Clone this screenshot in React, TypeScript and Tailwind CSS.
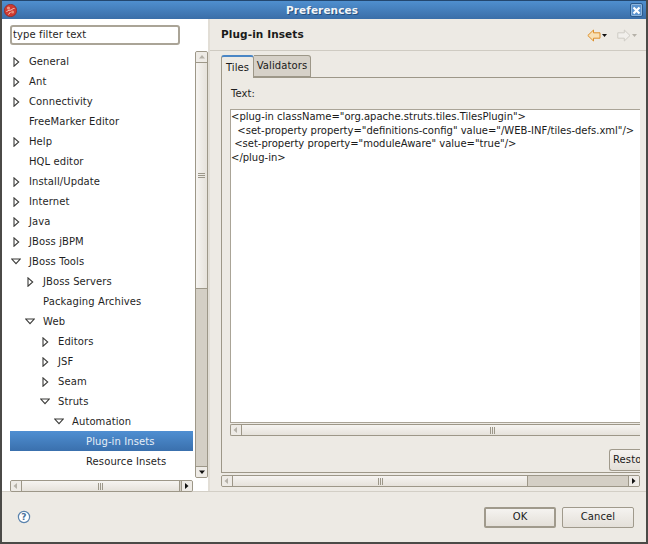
const tree: [string, number, "r" | "d" | ""][] = [
  ["General", 0, "r"], ["Ant", 0, "r"], ["Connectivity", 0, "r"], ["FreeMarker Editor", 0, ""],
  ["Help", 0, "r"], ["HQL editor", 0, ""], ["Install/Update", 0, "r"], ["Internet", 0, "r"],
  ["Java", 0, "r"], ["JBoss jBPM", 0, "r"], ["JBoss Tools", 0, "d"], ["JBoss Servers", 1, "r"],
  ["Packaging Archives", 1, ""], ["Web", 1, "d"], ["Editors", 2, "r"], ["JSF", 2, "r"],
  ["Seam", 2, "r"], ["Struts", 2, "d"], ["Automation", 3, "d"], ["Plug-in Insets", 4, ""], ["Resource Insets", 4, ""],
];
const indent = ["pl-[19px]", "pl-[33px]", "pl-[48px]", "pl-[62px]", "pl-[76px]"];

function Twist({ k }: { k: "r" | "d" }) {
  return k === "r" ? (
    <svg width="7" height="10" viewBox="0 0 7 10" className="absolute left-[-16px] top-[2px]"><path d="M1 .8 L5.7 5 L1 9.2 Z" fill="#fff" stroke="#3a3a38" strokeWidth="1.1" /></svg>
  ) : (
    <svg width="10" height="7" viewBox="0 0 10 7" className="absolute left-[-18px] top-[3px]"><path d="M.8 1 L9.2 1 L5 5.7 Z" fill="#fff" stroke="#3a3a38" strokeWidth="1.1" /></svg>
  );
}

function Tri({ dir, dim }: { dir: "l" | "r" | "u" | "d"; dim?: boolean }) {
  const d = { l: "M5 1 L1.5 4 L5 7 Z", r: "M2 1 L5.5 4 L2 7 Z", u: "M1 5.5 L4 2 L7 5.5 Z", d: "M1 2.5 L4 6 L7 2.5 Z" }[dir];
  return <svg width="8" height="8" viewBox="0 0 8 8"><path d={d} fill={dim ? "#b5b1a8" : "#111"} /></svg>;
}

function Grip() {
  return <div className="flex gap-[1px]"><i className="w-[1px] h-[7px] bg-[#9c9789]" /><i className="w-[1px] h-[7px] bg-[#9c9789]" /><i className="w-[1px] h-[7px] bg-[#9c9789]" /></div>;
}

function HScroll({ right, thumbEnd, className }: { right: boolean; thumbEnd?: number; className: string }) {
  return (
    <div className={`flex shrink-0 h-[12px] border border-[#9d9788] rounded-[2px] bg-[#d4cfc5] overflow-hidden ${className}`}>
      <div className="w-[11px] shrink-0 flex items-center justify-center bg-[#eeebe6] border-r border-[#9d9788]"><Tri dir="l" dim /></div>
      <div className="flex shrink-0 items-center justify-center bg-gradient-to-b from-[#f6f4f1] to-[#e6e2db] border-r border-[#9d9788]" style={{ width: thumbEnd }}>
        <Grip />
      </div>
      <div className="flex-1" />
      {right && <div className="w-[11px] shrink-0 flex items-center justify-center bg-[#eeebe6] border-l border-[#9d9788]"><Tri dir="r" /></div>}
    </div>
  );
}

function Btn({ label, def }: { label: string; def?: boolean }) {
  return (
    <div className={`w-[72px] h-[21px] flex items-center justify-center rounded-[2px] bg-gradient-to-b from-[#f5f3f0] to-[#e4e0d9] text-[#1a1a1a] ${def ? "border-2 border-[#a09a8c]" : "border border-[#a09a8c]"}`}>{label}</div>
  );
}

export default function App() {
  return (
    <div className="w-[648px] h-[544px] flex flex-col overflow-hidden bg-[#edeae4] text-[10px] tracking-[0.1px] leading-[14px] text-[#1f1f1f] font-['DejaVu_Sans',sans-serif] border-x-[2px] border-b-[2px] border-[#4b4a47]">
      <div className="h-[19px] -mx-[2px] shrink-0 relative flex items-center justify-center pr-[4px] bg-gradient-to-b from-[#4f8fcf] to-[#3a6ea8] border-t border-[#23476f]">
        <svg width="13" height="13" viewBox="0 0 13 13" className="absolute left-[4px] top-[3px]">
          <circle cx="6.5" cy="6.5" r="6.2" fill="#cf3a30" stroke="#8f2a22" strokeWidth=".7" />
          <circle cx="4.5" cy="4" r="1.6" fill="#ec9a86" />
          <circle cx="8.6" cy="8" r="1.5" fill="#e98d7a" />
          <path d="M2.5 8 C4 5.5 6 6.5 7 6 S9.5 4 10.5 4.5 M4.5 10.5 L6.5 8" stroke="#f3cfc6" strokeWidth="1" fill="none" />
        </svg>
        <span className="font-bold text-[10.5px] text-[#f2f5f8] [text-shadow:1px_1px_0_#26507e]">Preferences</span>
        <div className="absolute right-[5px] top-[2px] w-[13px] h-[14px] bg-[#5a93cf] border border-[#2b5a8d] rounded-[2px] flex items-center justify-center shadow-[inset_0_0_0_1px_#8db5dc]">
          <svg width="9" height="9" viewBox="0 0 9 9"><path d="M1.5 1.5 L7.5 7.5 M7.5 1.5 L1.5 7.5" stroke="#fff" strokeWidth="2.2" /></svg>
        </div>
      </div>

      <div className="flex h-[473px] shrink-0 border-b border-[#d3cfc6]">
        <div className="w-[206px] shrink-0 bg-white pl-[8px] pt-[6px] flex flex-col">
          <div className="w-[170px] h-[20px] border-2 border-[#aaa497] rounded-[3px] flex items-center pl-[1px] bg-white shrink-0">type filter text</div>
          <div className="flex mt-[6px] h-[427px] shrink-0">
            <div className="w-[183px] shrink-0 pt-[0px] overflow-hidden">
              {tree.map(([t, lvl, k]) => {
                const sel = t === "Plug-in Insets";
                return (
                  <div key={t} className={`h-[20px] flex items-center pt-[1px] ${indent[lvl]} ${sel ? "bg-gradient-to-b from-[#4f8fd2] to-[#3a70ad] text-[#e6eef7]" : ""}`}>
                    <span className="relative">{k && <Twist k={k} />}{t}</span>
                  </div>
                );
              })}
            </div>
            <div className="w-[13px] shrink-0 ml-[2px] flex flex-col border border-[#9d9788] rounded-[2px] bg-[#d4cfc5] overflow-hidden">
              <div className="h-[11px] shrink-0 flex items-center justify-center bg-[#eeebe6] border-b border-[#9d9788]"><Tri dir="u" dim /></div>
              <div className="h-[226px] shrink-0 flex items-center justify-center bg-gradient-to-r from-[#f6f4f1] to-[#e6e2db] border-b border-[#9d9788]">
                <div className="flex flex-col gap-[1px]"><i className="w-[7px] h-[1px] bg-[#9c9789]" /><i className="w-[7px] h-[1px] bg-[#9c9789]" /><i className="w-[7px] h-[1px] bg-[#9c9789]" /></div>
              </div>
              <div className="flex-1" />
              <div className="h-[11px] shrink-0 flex items-center justify-center bg-[#eeebe6] border-t border-[#9d9788]"><Tri dir="d" /></div>
            </div>
          </div>
          <HScroll right thumbEnd={158} className="w-[183px] mt-[2px]" />
        </div>

        <div className="w-[2px] shrink-0 bg-[#e2ded6]" />

        <div className="flex-1 min-w-0 pl-[11px] pr-[6px] flex flex-col">
          <div className="h-[32px] -ml-[11px] -mr-[6px] pl-[11px] pr-[9px] flex items-center justify-between border-b border-[#cfcbc2] shrink-0">
            <b className="text-[10.5px] text-[#1a1a1a] -mt-[1px]">Plug-in Insets</b>
            <div className="flex items-center gap-[10px] mt-[2px]">
              <svg width="20" height="13" viewBox="0 0 20 13"><path d="M.8 6.5 L6.5 1 V3.8 H13 V9.2 H6.5 V12 Z" fill="#f9e0b4" stroke="#dd8f2a" /><path d="M15 5 H20 L17.5 8 Z" fill="#111" /></svg>
              <svg width="20" height="13" viewBox="0 0 20 13"><path d="M13 6.5 L7.3 1 V3.8 H.8 V9.2 H7.3 V12 Z" fill="#f1efeb" stroke="#cfccc5" /><path d="M15 5 H20 L17.5 8 Z" fill="#b5b1a8" /></svg>
            </div>
          </div>
          <div className="flex h-[23px] mt-[4px] shrink-0 relative z-10">
            <div className="w-[33px] h-[23px] bg-[#edeae4] border border-[#9d9788] border-b-0 border-t-2 border-t-[#4a86c5] rounded-t-[3px] flex items-center justify-center text-[#1a1a1a]">Tiles</div>
            <div className="w-[57px] h-[22px] bg-[#d6d1c8] border border-[#9d9788] border-l-0 rounded-tr-[3px] flex items-center justify-center text-[#1a1a1a]">Validators</div>
          </div>
          <div className="-mt-[1px] h-[396px] shrink-0 border-l border-b border-t border-[#9d9788] overflow-hidden pl-[8px] flex flex-col">
            <div className="mt-[9px] ml-[1px] h-[14px]">Text:</div>
            <div className="mt-[8px] h-[314px] shrink-0 bg-white border border-[#aaa497] border-r-0 leading-[13.6px] tracking-normal whitespace-pre overflow-hidden text-[#1a1a1a]">
              {'<plug-in className="org.apache.struts.tiles.TilesPlugin">\n  <set-property property="definitions-config" value="/WEB-INF/tiles-defs.xml"/>\n <set-property property="moduleAware" value="true"/>\n</plug-in>'}
            </div>
            <HScroll right={false} thumbEnd={502} className="mt-[1px] border-r-0 rounded-r-none w-full" />
            <div className="flex justify-end mt-[13px] overflow-hidden">
              <div className="w-[31px] h-[22px] rounded-l-[3px] border border-r-0 border-[#a09a8c] bg-gradient-to-b from-[#f5f3f0] to-[#e4e0d9] flex items-center pl-[3px] overflow-hidden text-[#1a1a1a] whitespace-nowrap">Resto</div>
            </div>
          </div>
          <HScroll right thumbEnd={295} className="mt-[2px] w-[419px]" />
        </div>
      </div>

      <div className="flex-1 flex items-center justify-between pl-[15px] pr-[12px]">
        <svg width="14" height="14" viewBox="0 0 14 14"><circle cx="7" cy="7" r="5.6" fill="#fff" stroke="#5a83ad" strokeWidth="1.2" /><text x="7" y="10.3" textAnchor="middle" fontSize="9" fontWeight="700" fill="#4a739c" fontFamily="DejaVu Sans">?</text></svg>
        <div className="flex gap-[6px]"><Btn label="OK" def /><Btn label="Cancel" /></div>
      </div>
    </div>
  );
}
